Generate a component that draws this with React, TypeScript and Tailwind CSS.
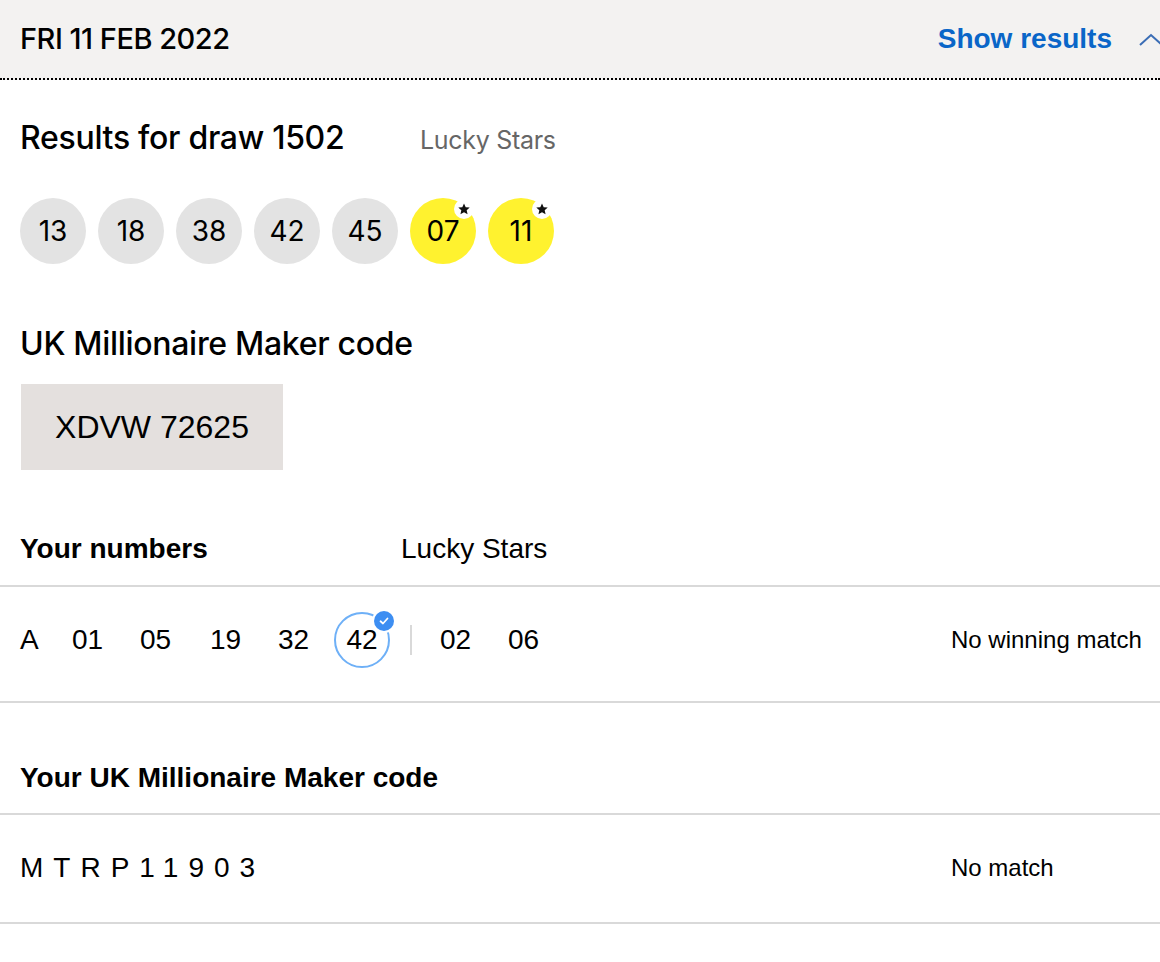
import React from "react";

const heading = "font-['Inter',sans-serif]";
const arial = "font-['Liberation_Sans',Arial,sans-serif]";

const mainNumbers = ["13", "18", "38", "42", "45"];
const starNumbers = ["07", "11"];

function StarBadge() {
  return (
    <span className="absolute top-[1px] right-[2px] flex h-[20px] w-[20px] items-center justify-center rounded-full bg-white">
      <svg width="14" height="14" viewBox="0 0 24 24" fill="#111">
        <path d="M12 2.5l2.9 6.3 6.9.7-5.2 4.6 1.5 6.8L12 17.4l-6.1 3.5 1.5-6.8-5.2-4.6 6.9-.7z" />
      </svg>
    </span>
  );
}

function Ball({ value, star }: { value: string; star?: boolean }) {
  return (
    <div
      className={`relative flex h-[66px] w-[66px] items-center justify-center rounded-full text-[28px] text-black ${
        star ? "bg-[#fff22f]" : "bg-[#e3e3e3]"
      }`}
    >
      {value}
      {star && <StarBadge />}
    </div>
  );
}

function MatchedNumber({ value }: { value: string }) {
  return (
    <span className="relative flex h-[56px] w-[56px] items-center justify-center rounded-full border-2 border-[#6eb0f7]">
      {value}
      <span className="absolute -top-[3px] -right-[6px] flex h-[20px] w-[20px] items-center justify-center rounded-full bg-[#3d8ef2] ring-2 ring-white">
        <svg width="12" height="12" viewBox="0 0 24 24" fill="none" stroke="white" strokeWidth="3.5" strokeLinecap="round" strokeLinejoin="round">
          <polyline points="5 12.5 10 17 19 7" />
        </svg>
      </span>
    </span>
  );
}

export default function App() {
  return (
    <div className={`w-[1160px] min-h-[962px] bg-white text-black ${arial}`}>
      {/* header */}
      <div className="flex h-[80px] items-center justify-between border-b-2 border-dotted border-black bg-[#f3f2f1] pl-[20px]">
        <h2 className={`${heading} text-[29px] font-medium tracking-[-0.5px]`}>FRI 11 FEB 2022</h2>
        <div className="flex items-center">
          <span className="text-[28px] font-bold text-[#0a66c8]">Show results</span>
          <svg className="ml-[26px] -mr-[4px]" width="26" height="16" viewBox="0 0 26 16" fill="none" stroke="#3a6db5" strokeWidth="2">
            <polyline points="2 14 13 4 24 14" />
          </svg>
        </div>
      </div>

      {/* draw results */}
      <div className={`${heading} px-[20px] pt-[42px]`}>
        <div className="flex items-baseline">
          <h3 className="w-[400px] text-[32px] font-medium leading-none tracking-[-0.3px]">Results for draw 1502</h3>
          <span className="text-[25px] tracking-[-0.3px] text-[#666]">Lucky Stars</span>
        </div>
        <div className="mt-[38px] flex gap-[12px]">
          {mainNumbers.map((n) => (
            <Ball key={n} value={n} />
          ))}
          {starNumbers.map((n) => (
            <Ball key={n} value={n} star />
          ))}
        </div>

        <h3 className="mt-[64px] text-[32px] font-medium leading-none tracking-[-0.3px]">UK Millionaire Maker code</h3>
        <div className={`${arial} mt-[24px] ml-[1px] flex h-[86px] w-[262px] items-center justify-center bg-[#e4e0de] text-[32px]`}>
          XDVW 72625
        </div>
      </div>

      {/* your numbers */}
      <div className="mt-[44px] flex h-[73px] items-center border-b-2 border-[#d9d9d9] px-[20px] text-[28px]">
        <span className="w-[381px] font-bold">Your numbers</span>
        <span>Lucky Stars</span>
      </div>
      <div className="flex h-[116px] items-center border-b-2 border-[#d9d9d9] pb-[8px] pl-[20px] text-[28px]">
        <div className="flex flex-1 items-center">
          <span className="w-[52px]">A</span>
          <span className="w-[68px]">01</span>
          <span className="w-[70px]">05</span>
          <span className="w-[68px]">19</span>
          <span className="w-[56px]">32</span>
          <MatchedNumber value="42" />
          <span className="ml-[20px] mr-[28px] h-[30px] w-[2px] bg-[#d9d9d9]" />
          <span className="w-[68px]">02</span>
          <span>06</span>
        </div>
        <span className="w-[209px] text-[24px]">No winning match</span>
      </div>

      <div className="mt-[40px] flex h-[72px] items-center border-b-2 border-[#d9d9d9] px-[20px] text-[28px] font-bold">
        Your UK Millionaire Maker code
      </div>
      <div className="flex h-[109px] items-center border-b-2 border-[#d9d9d9] pl-[20px]">
        <span className="flex-1 text-[28px] tracking-[10px]">MTRP11903</span>
        <span className="w-[209px] text-[24px]">No match</span>
      </div>
    </div>
  );
}
